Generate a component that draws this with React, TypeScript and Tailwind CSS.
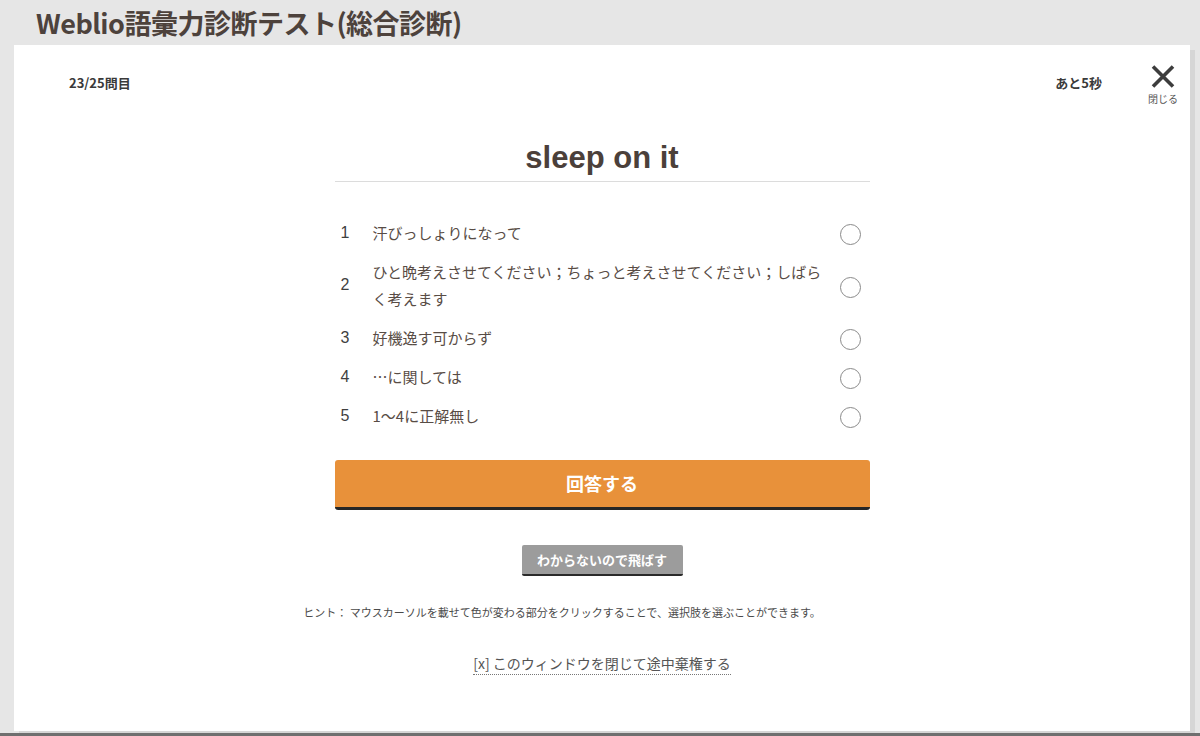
import React from "react";

const jp = { fontFamily: '"Noto Sans CJK JP", "Noto Sans", sans-serif' };
const mixed = { fontFamily: '"Liberation Sans", "Noto Sans CJK JP", sans-serif' };

const options: { n: number; lines: string[] }[] = [
  { n: 1, lines: ["汗びっしょりになって"] },
  { n: 2, lines: ["ひと晩考えさせてください；ちょっと考えさせてください；しばら", "く考えます"] },
  { n: 3, lines: ["好機逸す可からず"] },
  { n: 4, lines: ["…に関しては"] },
  { n: 5, lines: ["1～4に正解無し"] },
];

export default function App() {
  return (
    <div className="h-[736px] w-[1200px] bg-[#e6e6e6] flex flex-col overflow-hidden" style={jp}>
      <div className="h-[45px] flex items-center pl-[36px] shrink-0">
        <h1 className="text-[27px] font-bold text-[#4d423c] leading-none tracking-[-0.5px]">
          Weblio語彙力診断テスト(総合診断)
        </h1>
      </div>
      <div className="flex-1 ml-[14px] w-[1176px] bg-white shadow-[5px_5px_0_#d6d6d6] mb-[2px] flex flex-col">
        <div className="flex items-center justify-between pl-[55px] pr-[13px] pt-[20px]">
          <div className="text-[13px] font-bold text-[#3a3a3a] mt-[-4px]">23/25問目</div>
          <div className="flex items-center gap-[47px]">
            <div className="text-[13px] font-bold text-[#3a3a3a] mt-[-4px]">あと5秒</div>
            <div className="flex flex-col items-center w-[28px]">
              <svg width="24" height="23" viewBox="0 0 24 23">
                <path d="M2 1.5 L22 21.5 M22 1.5 L2 21.5" stroke="#3d3d3d" strokeWidth="3.6" />
              </svg>
              <div className="text-[10px] text-[#555] leading-none mt-[6px] whitespace-nowrap">閉じる</div>
            </div>
          </div>
        </div>

        <div className="w-[535px] mx-auto mt-[38px] flex flex-col">
          <div className="border-b border-[#dcdcdc] pb-[7px] text-center">
            <div className="text-[31px] font-bold text-[#4b403a] leading-[32px]" style={mixed}>
              sleep on it
            </div>
          </div>

          <div className="mt-[32px] flex flex-col">
            {options.map((o) => (
              <div key={o.n} className="flex items-center pt-[5px] pb-[3px] pr-[9px]">
                <div className="w-[38px] pl-[6px] pb-[4px] text-[16px] text-[#3f3f3f]" style={mixed}>
                  {o.n}
                </div>
                <div className="flex-1 text-[15px] leading-[27px] text-[#584c45] pb-[4px]">
                  {o.lines.map((l, i) => (
                    <div key={i} className="whitespace-nowrap">{l}</div>
                  ))}
                </div>
                <div className="w-[21px] h-[21px] rounded-full border-[1.5px] border-[#8a8a8a] bg-white shrink-0" />
              </div>
            ))}
          </div>

          <button className="mt-[24px] h-[50px] w-full rounded-[3px] bg-[#e8913a] border-b-[3px] border-[#262626] text-white text-[18px] font-bold flex items-center justify-center">
            回答する
          </button>

          <div className="flex justify-center mt-[35px]">
            <button className="h-[31px] w-[161px] rounded-[2px] bg-[#9c9c9c] border-b-[2px] border-[#2a2a2a] text-white text-[13px] font-bold flex items-center justify-center">
              わからないので飛ばす
            </button>
          </div>
        </div>

        <div className="mt-[27px] flex justify-center pr-[80px]">
          <div className="text-[11px] leading-[18px] text-[#4a4a4a] whitespace-nowrap">
            ヒント： マウスカーソルを載せて色が変わる部分をクリックすることで、選択肢を選ぶことができます。
          </div>
        </div>

        <div className="mt-[32px] flex justify-center">
          <span className="text-[14px] leading-[20px] text-[#555] border-b border-dotted border-[#777] pb-[1px]">
            [x] このウィンドウを閉じて途中棄権する
          </span>
        </div>
      </div>
      <div className="h-[3px] bg-[#6f6f6f] shrink-0" />
    </div>
  );
}
